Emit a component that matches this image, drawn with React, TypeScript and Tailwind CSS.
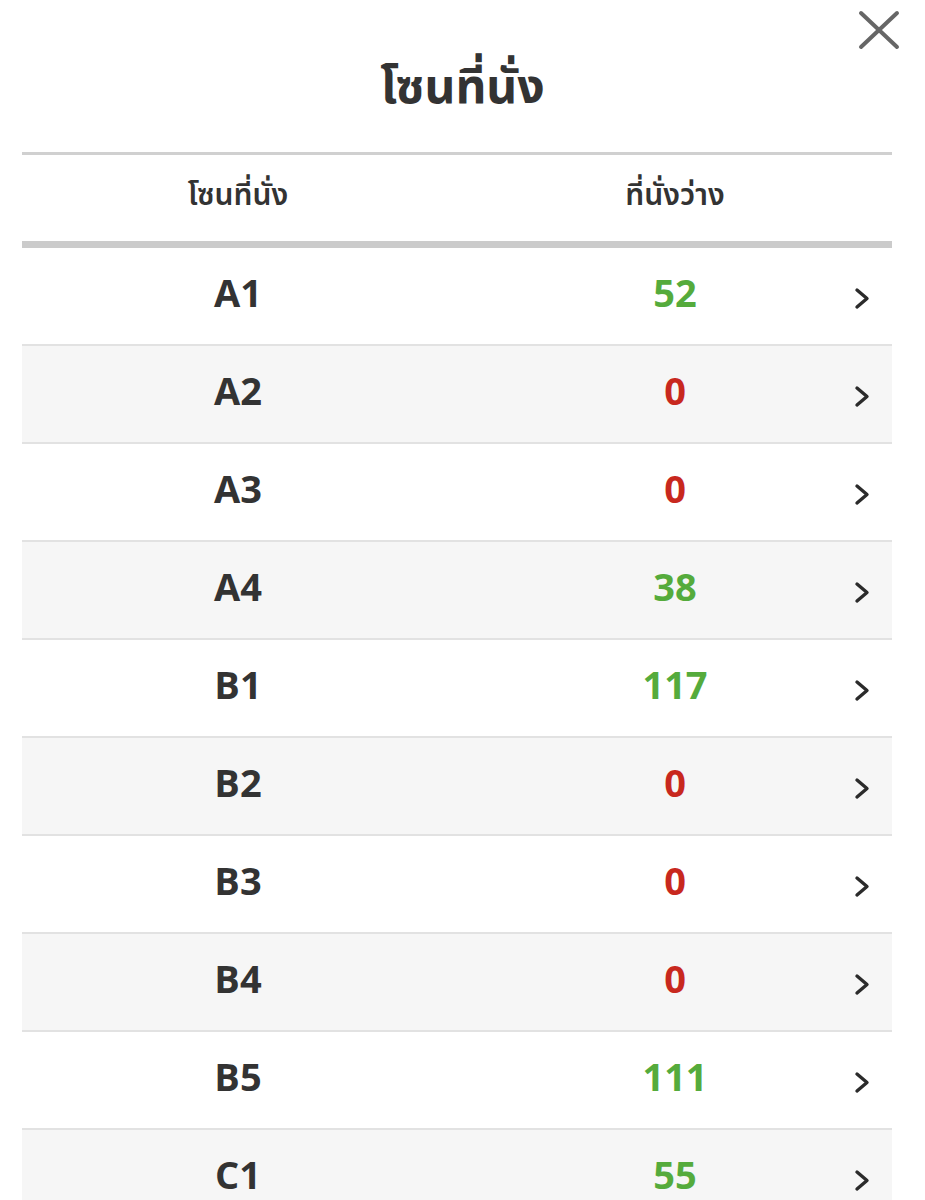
interface Zone {
  name: string;
  free: number;
}

const zones: Zone[] = [
  { name: "A1", free: 52 },
  { name: "A2", free: 0 },
  { name: "A3", free: 0 },
  { name: "A4", free: 38 },
  { name: "B1", free: 117 },
  { name: "B2", free: 0 },
  { name: "B3", free: 0 },
  { name: "B4", free: 0 },
  { name: "B5", free: 111 },
  { name: "C1", free: 55 },
];

const font = { fontFamily: '"Open Sans", "Noto Sans", "Noto Sans Thai", sans-serif' };

function Chevron() {
  return (
    <svg width="16" height="23" viewBox="0 0 16 23" fill="none" stroke="#2b2b2b" strokeWidth="3.4" strokeLinecap="round" strokeLinejoin="round">
      <path d="M3 3 L13 11.5 L3 20" />
    </svg>
  );
}

export default function App() {
  return (
    <div className="relative min-h-[1200px] bg-white text-[#333]" style={font}>
      {/* close button */}
      <button className="absolute left-[858px] top-[10px] text-[#666]">
        <svg width="42" height="40" viewBox="0 0 42 40" fill="none" stroke="currentColor" strokeWidth="4" strokeLinecap="round">
          <path d="M3 3 L39 37" />
          <path d="M39 3 L3 37" />
        </svg>
      </button>

      <h1 className="pt-[53px] text-center text-[48px] font-bold leading-[64px]">โซนที่นั่ง</h1>

      <div className="ml-[22px] mt-[35px] w-[870px]">
        <div className="grid h-[96px] grid-cols-[432px_1fr_60px] items-center border-t-[3px] border-b-[7px] border-t-[#d0d0d0] border-b-[#cbcbcb] pb-[10px] text-[30px] font-semibold">
          <div className="text-center">โซนที่นั่ง</div>
          <div className="pl-[64px] text-center">ที่นั่งว่าง</div>
          <div />
        </div>

        {zones.map((zone, i) => (
          <div
            key={zone.name}
            className={`grid h-[98px] grid-cols-[432px_1fr_60px] items-center border-b-2 border-[#e2e2e2] pb-[7px] text-[38px] font-bold ${
              i % 2 === 1 ? "bg-[#f6f6f6]" : "bg-white"
            }`}
          >
            <div className="text-center">{zone.name}</div>
            <div
              className={`pl-[64px] text-center ${
                zone.free > 0 ? "text-[#55ab3c]" : "text-[#c8281e]"
              }`}
            >
              {zone.free}
            </div>
            <div className="flex justify-center pt-[11px]">
              <Chevron />
            </div>
          </div>
        ))}
      </div>
    </div>
  );
}
